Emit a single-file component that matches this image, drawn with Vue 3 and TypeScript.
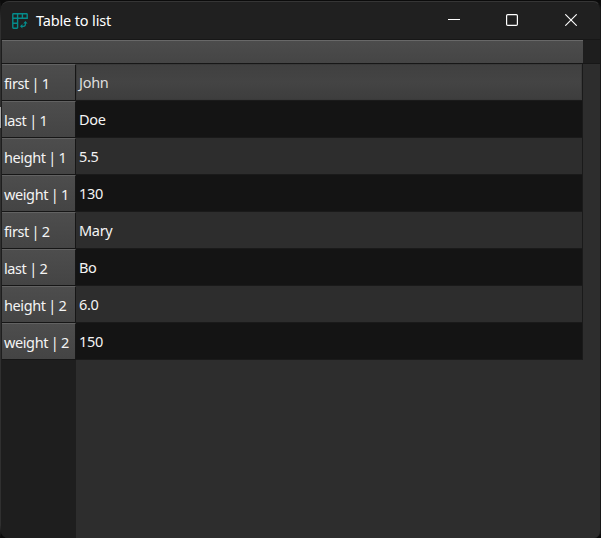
<script setup lang="ts">
interface Row {
  label: string
  value: string
}

const people = [
  { first: 'John', last: 'Doe', height: '5.5', weight: '130' },
  { first: 'Mary', last: 'Bo', height: '6.0', weight: '150' },
]

const rows: Row[] = people.flatMap((person, i) =>
  Object.entries(person).map(([key, value]) => ({ label: `${key} | ${i + 1}`, value })),
)
</script>

<template>
  <div class="desktop">
    <div class="window">
      <header class="titlebar">
        <svg class="logo" width="16" height="16" viewBox="0 0 16 16" fill="none" stroke="#058b8b" stroke-width="1.4">
          <path d="M1.5 .8H14.5Q15.2 .8 15.2 1.5V5.3H5.6V14.5Q5.6 15.2 4.9 15.2H1.5Q.8 15.2 .8 14.5V1.5Q.8 .8 1.5 .8Z M.8 5.3H5.6V.8 M10.4 .8V5.3 M.8 10.3H5.6" />
          <path d="M9 13.3H11.4Q13.4 13.3 13.4 11.3V9" stroke-width="1.2" />
          <path d="M11.2 10.4L13.4 8L15.6 10.4Z M10.4 11.1L8 13.3L10.4 15.5Z" fill="#058b8b" stroke="none" />
        </svg>
        <h1 class="title">Table to list</h1>
        <div class="controls">
          <svg width="12" height="12" viewBox="0 0 12 12"><path d="M0 5.5H12" stroke="#fff" /></svg>
          <svg width="12" height="12" viewBox="0 0 12 12"><rect x=".6" y=".6" width="10.8" height="10.8" rx="1.2" fill="none" stroke="#fff" stroke-width="1.2" /></svg>
          <svg class="close" width="12" height="12" viewBox="0 0 12 12"><path d="M.3 .3L11.7 11.7M11.7 .3L.3 11.7" stroke="#fff" stroke-width="1.1" /></svg>
        </div>
      </header>
      <div class="columns"><div class="column-head"></div></div>
      <main class="body">
        <div class="row-heads">
          <div v-for="row in rows" :key="row.label" class="row-head"><span>{{ row.label }}</span></div>
        </div>
        <div class="cells">
          <div v-for="(row, i) in rows" :key="row.label" class="cell" :class="{ odd: i % 2 === 1, current: i === 0 }">
            <span>{{ row.value }}</span>
          </div>
        </div>
      </main>
    </div>
  </div>
</template>

<style>
body {
  background: #0c0c0c;
}
</style>

<style scoped>
.desktop {
  box-sizing: border-box;
  width: 601px;
  height: 538px;
  padding-top: 1px;
  overflow: hidden;
  background:
    linear-gradient(#a8a8a8, #a8a8a8) 0 107px / 1px 21px no-repeat,
    linear-gradient(#0b0b0b, #303030 20px, #303030 525px, #0b0b0b) 0 0 / 1px 538px no-repeat,
    #0b0b0b;
  font-family: "Noto Sans", "Open Sans", sans-serif;
  font-size: 14.5px;
  letter-spacing: -0.3px;
  color: #f4f4f4;
}
.window {
  box-sizing: border-box;
  display: flex;
  flex-direction: column;
  width: 600px;
  height: 537px;
  margin-left: 1px;
  overflow: hidden;
  border: 1px solid #353535;
  border-width: 1px 1px 0 0;
  border-right-color: #171717;
  border-radius: 8px 8px 7px 7px;
  background: #202020;
}
.titlebar {
  box-sizing: border-box;
  display: flex;
  flex: none;
  align-items: center;
  height: 37px;
  padding: 0 23px 0 11px;
}
.logo {
  flex: none;
  margin-top: 1px;
}
.title {
  margin: 0 0 2px 8px;
  font-size: 14.5px;
  font-weight: 400;
  letter-spacing: -0.15px;
  line-height: 20px;
  white-space: nowrap;
  color: #fff;
}
.controls {
  display: flex;
  gap: 46px;
  margin: 0 0 1px auto;
}
.controls svg {
  display: block;
}
.controls .close {
  margin-left: 1px;
}
.columns {
  flex: none;
  height: 25px;
  box-sizing: border-box;
  padding-left: 1px;
  border-top: 1px solid #171717;
  border-bottom: 1px solid #171717;
  background: #1e1e1e;
}
.column-head {
  box-sizing: border-box;
  width: 581px;
  height: 23px;
  border-top: 1px solid #686868;
  background: linear-gradient(#4c4c4c, #454545);
}
.body {
  display: flex;
  flex: 1;
  padding-left: 1px;
  background: #1e1e1e;
}
.row-heads {
  width: 74px;
  flex: none;
}
.row-head {
  box-sizing: border-box;
  display: flex;
  align-items: center;
  width: 74px;
  height: 37px;
  padding: 0 0 0 2px;
  border-top: 1px solid #626262;
  border-right: 1px solid #161616;
  border-bottom: 1px solid #161616;
  background: linear-gradient(#4d4d4d, #444444);
  letter-spacing: -0.4px;
  word-spacing: -0.7px;
  white-space: nowrap;
}
.cells {
  flex: 1;
  background: #2d2d2d;
}
.cell {
  box-sizing: border-box;
  display: flex;
  align-items: center;
  width: 507px;
  height: 37px;
  padding-left: 3px;
  border-right: 1px solid #1a1a1a;
  border-bottom: 1px solid #1a1a1a;
}
.cell.odd {
  background: #141414;
}
.cell.current {
  background: linear-gradient(#404040, #444444 50%, #3d3d3d);
  box-shadow: inset 0 0 0 1px #3a3a3a;
  color: #dedede;
}
</style>
